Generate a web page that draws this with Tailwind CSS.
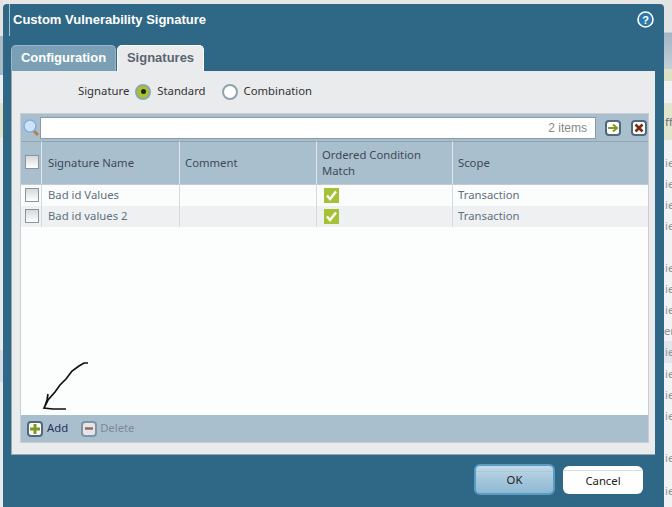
<!DOCTYPE html>
<html><head><meta charset="utf-8"><script src="https://cdn.jsdelivr.net/npm/@tailwindcss/browser@4"></script></head>
<body class="m-0 w-[672px] h-[507px] overflow-hidden bg-[#e6e6e6] relative font-['Noto_Sans',sans-serif] text-[11.3px]">
<!-- page behind the dialog: left strip -->
<div class="absolute left-0 top-0 w-[3px] h-[507px] flex flex-col bg-[#e9eaec]">
  <div class="h-[36px] bg-[#e3e3e1]"></div>
  <div class="h-[39px] bg-[#a9bac7]"></div>
  <div class="h-[28px] bg-[#eceff1]"></div>
  <div class="h-[35px] bg-[#dfe3c8]"></div>
  <div class="h-[212px]"></div>
  <div class="h-[32px] bg-[#d5dde4]"></div>
</div>
<!-- page behind the dialog: right strip -->
<div class="absolute left-[664px] top-0 w-[8px] h-[507px] flex flex-col bg-[#f1f2f3] text-[#8d949a] overflow-hidden">
  <div class="h-[33px] bg-[#e3e3e3] border-b border-[#c5cdd3]"></div>
  <div class="h-[36px] bg-gradient-to-b from-[#a2b6c4] to-[#c4d0d8]"></div>
  <div class="h-[12px] bg-[#dde2c5]"></div>
  <div class="h-[22px]"></div>
  <div class="h-[37px] bg-[#e2e6cc] leading-[37px] pl-[1px] text-[#6d7072]">ff</div>
  <div class="h-[12px]"></div>
  <div class="h-[21px] leading-[21px] pl-[1px]">ie</div>
  <div class="h-[21px] leading-[21px] pl-[1px]">ie</div>
  <div class="h-[21px] leading-[21px] pl-[1px]">ie</div>
  <div class="h-[21px] leading-[21px] pl-[1px]">ie</div>
  <div class="h-[21px]"></div>
  <div class="h-[21px] leading-[21px] pl-[1px]">ie</div>
  <div class="h-[21px] leading-[21px] pl-[1px]">ie</div>
  <div class="h-[21px] leading-[21px] pl-[1px]">ie</div>
  <div class="h-[21px] leading-[21px]">er</div>
  <div class="h-[22px] leading-[22px] pl-[1px] bg-[#dfe6ec]">ie</div>
  <div class="h-[21px] leading-[21px] pl-[1px]">ie</div>
  <div class="h-[21px] leading-[21px] pl-[1px]">ie</div>
  <div class="h-[21px] leading-[21px] pl-[1px]">ie</div>
  <div class="h-[21px]"></div>
  <div class="h-[21px] leading-[21px] pl-[1px]">ie</div>
  <div class="h-[12px]"></div>
  <div class="h-[21px] leading-[21px] pl-[1px]">ie</div>
</div>

<div class="absolute left-[3px] top-[4px] w-[661px] h-[503px] bg-[#2f6887] rounded-t-[4px] flex flex-col px-[8px]">
  <div class="h-[29px] flex items-center justify-between pt-[2px] pr-[1px]">
    <span class="font-['Liberation_Sans',sans-serif] font-bold text-[13px] text-white pl-[2px]">Custom Vulnerability Signature</span>
    <svg width="17" height="17" viewBox="0 0 17 17" class="mr-[1px]"><circle cx="8.500" cy="8.500" r="7.500" fill="#2f78ad" stroke="#fff" stroke-width="1.600"/><text x="8.500" y="12.500" text-anchor="middle" font-size="11" font-weight="700" fill="#fff" font-family="Liberation Sans">?</text></svg>
  </div>
  <div class="flex h-[26px] mt-[12px] items-end gap-[1px]">
    <div class="w-[105px] h-[26px] pb-[1px] flex items-center justify-center bg-[#7b9fb5] border border-b-0 border-[#9db6c6] rounded-t-[5px] text-white font-bold text-[13px] font-['Liberation_Sans',sans-serif]">Configuration</div>
    <div class="w-[87px] h-[26px] pb-[1px] flex items-center justify-center bg-[#eaebed] border border-b-0 border-white rounded-t-[5px] text-[#5a6570] font-bold text-[13px] font-['Liberation_Sans',sans-serif]">Signatures</div>
  </div>
  <div class="w-[644px] h-[384px] bg-[#eaebed] border-b border-l border-[#9aa5ad] flex flex-col">
    <div class="h-[42px] flex items-center pl-[66px] text-[#333] pb-[1px]">
      <span>Signature</span>
      <span class="ml-[6px] w-[16px] h-[16px] rounded-full bg-[#a6c22f] border-2 border-[#8fa3ae] flex items-center justify-center"><span class="w-[5px] h-[5px] rounded-full bg-[#222]"></span></span>
      <span class="ml-[6px]">Standard</span>
      <span class="ml-[16px] w-[16px] h-[16px] rounded-full bg-white border-2 border-[#8fa3ae]"></span>
      <span class="ml-[6px]">Combination</span>
    </div>
    <div class="ml-[8px] w-[629px] h-[330px] border border-[#c9ced2] bg-white flex flex-col">
      <div class="h-[27px] bg-[#a9bfce] flex items-center pl-[2px] pr-[1px] shrink-0">
        <svg width="17" height="19" viewBox="0 0 17 19"><line x1="10" y1="12" x2="15" y2="17" stroke="#b9803f" stroke-width="3"/><circle cx="7" cy="8" r="6" fill="#cfe3f7" stroke="#7fb0e6" stroke-width="1.500"/></svg>
        <div class="flex-1 h-[22px] bg-white border border-[#8c9aa5] flex items-center justify-end pr-[8px] text-[#888] text-[12px] font-['Liberation_Sans',sans-serif]">2 items</div>
        <span class="ml-[9px] w-[16px] h-[16px] rounded-[4px] bg-white border-2 border-[#50687a] flex items-center justify-center"><svg width="12" height="10" viewBox="0 0 12 10"><path d="M1 5h8M6 1.500 10 5 6 8.500" fill="none" stroke="#7f9a1e" stroke-width="2"/></svg></span>
        <span class="ml-[10px] w-[16px] h-[16px] rounded-[4px] bg-white border-2 border-[#50687a] flex items-center justify-center"><svg width="10" height="10" viewBox="0 0 10 10"><path d="M1.500 1.500l7 7M8.500 1.500l-7 7" stroke="#7a2a14" stroke-width="2.600"/></svg></span>
      </div>
      <div class="grid grid-cols-[21px_138px_137px_136px_1fr] text-[#3d4a55] shrink-0">
        <div class="h-[44px] bg-[#a9bfce] border-t border-[#8ea5b5] border-b border-b-[#c0ccd5] border-r border-r-[#dfe6eb] pl-[4px] pt-[13px]"><span class="block w-[14px] h-[14px] border border-[#8a949b] bg-gradient-to-b from-[#d5d8da] to-white"></span></div>
        <div class="h-[44px] bg-[#a9bfce] border-t border-[#8ea5b5] border-b border-b-[#c0ccd5] border-r border-r-[#dfe6eb] flex items-center pl-[6px]">Signature Name</div>
        <div class="h-[44px] bg-[#a9bfce] border-t border-[#8ea5b5] border-b border-b-[#c0ccd5] border-r border-r-[#dfe6eb] flex items-center pl-[5px]">Comment</div>
        <div class="h-[44px] bg-[#a9bfce] border-t border-[#8ea5b5] border-b border-b-[#c0ccd5] border-r border-r-[#dfe6eb] flex items-center pl-[5px] leading-[16px]">Ordered Condition<br>Match</div>
        <div class="h-[44px] bg-[#a9bfce] border-t border-[#8ea5b5] border-b border-b-[#c0ccd5] flex items-center pl-[5px]">Scope</div>

        <div class="h-[21px] bg-[#fbfcfc] border-r border-[#d5dade] pl-[4px] pt-[3px]"><span class="block w-[14px] h-[14px] border border-[#8a949b] bg-gradient-to-b from-[#d5d8da] to-white"></span></div>
        <div class="h-[21px] bg-[#fbfcfc] border-r border-[#d5dade] flex items-center pl-[6px] text-[#60707e]">Bad id Values</div>
        <div class="h-[21px] bg-[#fbfcfc] border-r border-[#d5dade]"></div>
        <div class="h-[21px] bg-[#fbfcfc] border-r border-[#d5dade] pl-[7px] pt-[3px]"><svg width="15" height="15" viewBox="0 0 15 15" class="block"><rect width="15" height="15" fill="#a5c234"/><path d="M3 7.500 6 11 12 3.500" fill="none" stroke="#fff" stroke-width="2.400"/></svg></div>
        <div class="h-[21px] bg-[#fbfcfc] flex items-center pl-[5px] text-[#60707e]">Transaction</div>

        <div class="h-[21px] bg-[#eef0f2] border-r border-[#d5dade] pl-[4px] pt-[3px]"><span class="block w-[14px] h-[14px] border border-[#8a949b] bg-gradient-to-b from-[#d5d8da] to-white"></span></div>
        <div class="h-[21px] bg-[#eef0f2] border-r border-[#d5dade] flex items-center pl-[6px] text-[#60707e]">Bad id values 2</div>
        <div class="h-[21px] bg-[#eef0f2] border-r border-[#d5dade]"></div>
        <div class="h-[21px] bg-[#eef0f2] border-r border-[#d5dade] pl-[7px] pt-[3px]"><svg width="15" height="15" viewBox="0 0 15 15" class="block"><rect width="15" height="15" fill="#a5c234"/><path d="M3 7.500 6 11 12 3.500" fill="none" stroke="#fff" stroke-width="2.400"/></svg></div>
        <div class="h-[21px] bg-[#eef0f2] flex items-center pl-[5px] text-[#60707e]">Transaction</div>
      </div>
      <div class="flex-1 relative bg-[#fcfdfd]">
        <svg class="absolute left-[21px] top-[134px]" width="50" height="52" viewBox="0 0 50 52"><path d="M46 2 42 2 37 5 30 10 24 18 18 24 13 31 6 39 3 45 2 47M6 33 5 39 3 45 2 47 11 48 24 48" fill="none" stroke="#111" stroke-width="1.700"/></svg>
      </div>
      <div class="h-[27px] bg-[#a9bfce] flex items-center pl-[6px] shrink-0">
        <span class="w-[16px] h-[16px] rounded-[4px] bg-white border-2 border-[#50687a] flex items-center justify-center"><svg width="10" height="10" viewBox="0 0 10 10"><path d="M5 0v10M0 5h10" stroke="#7f9a1e" stroke-width="3"/></svg></span>
        <span class="ml-[4px] text-[#1f2f55]">Add</span>
        <span class="ml-[13px] w-[16px] h-[16px] rounded-[4px] bg-[#e4e6e9] border-2 border-[#7f95a5] flex items-center justify-center"><svg width="8" height="3" viewBox="0 0 8 3"><path d="M0 1.500h8" stroke="#96615f" stroke-width="2.400"/></svg></span>
        <span class="ml-[3px] text-[#7d8a94]">Delete</span>
      </div>
    </div>
  </div>
  <div class="flex-1 flex justify-end items-start gap-[8px] pr-[13px] pt-[9px]">
    <div class="relative w-[81px] h-[31px] pt-[2px] rounded-[6px] border-2 border-[#5b9bc2] bg-gradient-to-b from-[#c2d9e7] via-[#a5c7dc] to-[#8db9d3] flex items-center justify-center text-[#222]">OK<span class="absolute left-0 right-0 top-[5px] h-px bg-[#a9c8da]"></span></div>
    <div class="relative w-[80px] h-[28px] pt-[2px] mt-[2px] rounded-[6px] bg-white flex items-center justify-center text-[#222]">Cancel<span class="absolute left-0 right-0 top-[4px] h-px bg-[#cfdde6]"></span></div>
  </div>
</div>
<!-- thin light line on the dialog's left edge -->
<div class="absolute left-[9px] top-[4px] w-px h-[32px] bg-[#a9c2d0]"></div>
</body></html>
